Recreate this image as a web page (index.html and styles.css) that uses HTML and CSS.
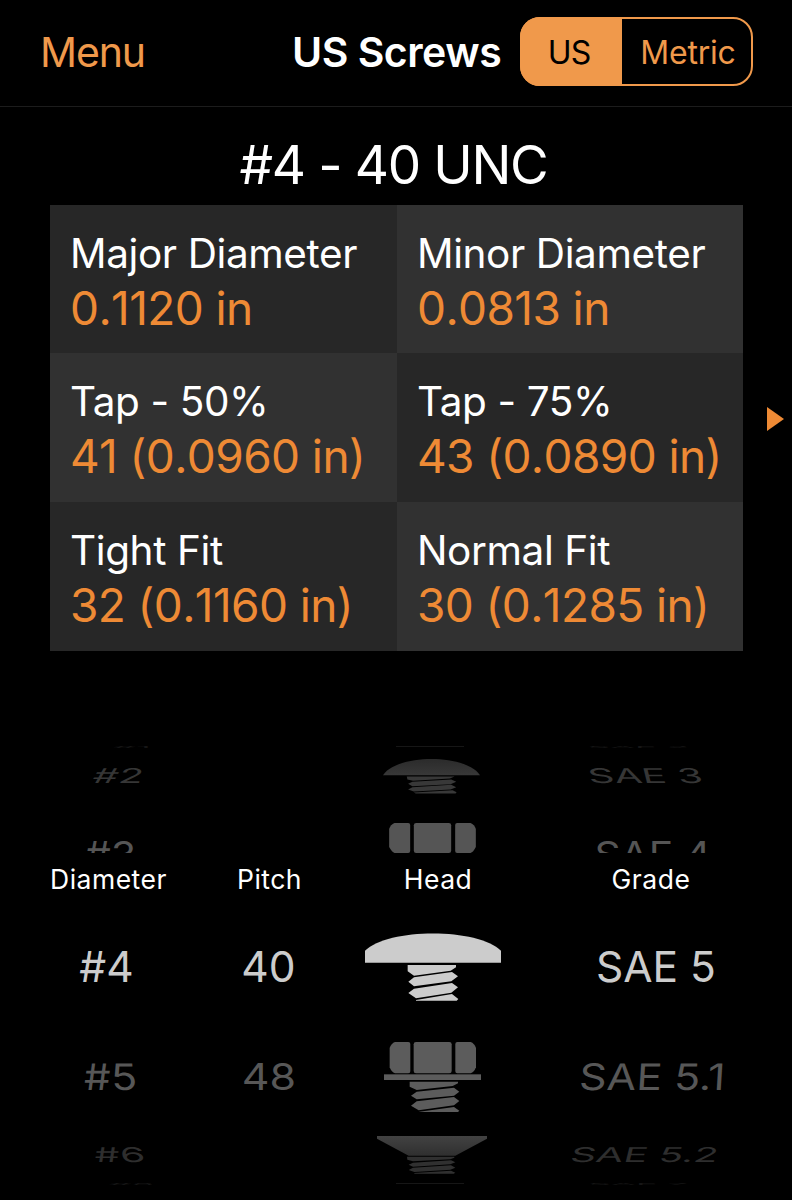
FILE: index.html
```html
<!DOCTYPE html>
<html lang="en">
<head>
    <meta charset="UTF-8">
    <meta name="viewport" content="width=device-width, initial-scale=1.0">
    <title>US Screws</title>
    <link rel="stylesheet" href="styles.css">
</head>
<body>
    <header class="navbar">
        <a class="menu">Menu</a>
        <h1>US Screws</h1>
        <div class="segmented">
            <span class="segment active">US</span>
            <span class="segment">Metric</span>
        </div>
    </header>

    <h2 class="screw-name">#4 - 40 UNC</h2>

    <main class="details">
        <div class="table">
            <div class="cell">
                <div class="label">Major Diameter</div>
                <div class="value">0.1120 in</div>
            </div>
            <div class="cell light">
                <div class="label">Minor Diameter</div>
                <div class="value">0.0813 in</div>
            </div>
            <div class="cell light">
                <div class="label">Tap - 50%</div>
                <div class="value">41 (0.0960 in)</div>
            </div>
            <div class="cell">
                <div class="label">Tap - 75%</div>
                <div class="value">43 (0.0890 in)</div>
            </div>
            <div class="cell">
                <div class="label">Tight Fit</div>
                <div class="value">32 (0.1160 in)</div>
            </div>
            <div class="cell light">
                <div class="label">Normal Fit</div>
                <div class="value">30 (0.1285 in)</div>
            </div>
        </div>
        <svg class="next" width="17" height="24" viewBox="0 0 17 24"><path d="M0 0L17 12L0 24Z"/></svg>
    </main>

    <section class="picker">
        <div class="row edge edge-top">
            <span class="left">#1</span>
            <span></span>
            <svg width="68" height="2" viewBox="0 0 68 2"><path d="M0 0H68V1H0Z"/></svg>
            <span class="right">SAE 2</span>
        </div>
        <div class="row far-top">
            <span class="left">#2</span>
            <span></span>
            <!-- truss head -->
            <svg width="97" height="35" viewBox="128 86 290 104">
                <defs>
                    <linearGradient id="fadeTop" x1="0" y1="0" x2="0" y2="1">
                        <stop offset="0" stop-color="#2b2b2b"/>
                        <stop offset="1" stop-color="#383838"/>
                    </linearGradient>
                </defs>
                <path fill="url(#fadeTop)" d="M128 134C170 70 376 70 418 134Z"/>
                <path d="M199 138H342L328 144L218 151L201 147ZM216 154L332 147L347 154L330 161L216 167L203 160ZM216 170L332 163L347 170L330 177L220 183L203 177ZM220 186L336 179L348 185L345 189H226Z"/>
            </svg>
            <span class="right">SAE 3</span>
        </div>
        <div class="row near-top">
            <span class="left">#3</span>
            <span></span>
            <svg width="87" height="30" viewBox="147 280 260 90">
                <path d="M163 280H204Q210 280 210 286V364Q210 370 204 370H163Q156 368 147 352V298Q151 285 163 280Z"/>
                <rect x="221" y="280" width="112" height="90" rx="7"/>
                <path d="M391 280H351Q345 280 345 286V364Q345 370 351 370H391Q399 368 407 352V298Q403 285 391 280Z"/>
            </svg>
            <span class="right">SAE 4</span>
        </div>
        <div class="row heading">
            <span>Diameter</span>
            <span>Pitch</span>
            <span>Head</span>
            <span>Grade</span>
        </div>
        <div class="row selected">
            <span>#4</span>
            <span>40</span>
            <svg width="136" height="68" viewBox="75 67 408 204">
                <path d="M75 156V120C143 51 415 51 483 120V156Z"/>
                <path d="M203 163H348V170L332 180L222 195L203 182ZM222 200L336 184L354 197L334 212L222 227L205 213ZM222 234L336 217L354 230L334 246L228 263L205 247ZM228 268L336 250L355 265L350 270H228Z"/>
            </svg>
            <span>SAE 5</span>
        </div>
        <div class="row near-bottom">
            <span class="left">#5</span>
            <span>48</span>
            <!-- hex flange head -->
            <svg width="97" height="70" viewBox="134 66 291 210">
                <path d="M167 66H207Q213 66 213 72V154Q213 160 207 160H167Q157 157 151 142V84Q156 70 167 66Z"/>
                <rect x="223" y="66" width="114" height="94" rx="7"/>
                <path d="M394 66H354Q348 66 348 72V154Q348 160 354 160H394Q404 157 410 142V84Q405 70 394 66Z"/>
                <rect x="134" y="163" width="291" height="17"/>
                <path d="M211 185H356V190L340 198L232 210L211 200ZM232 215L344 203L360 215L344 227L232 238L215 227ZM232 244L344 231L360 243L344 256L238 271L215 257ZM240 275L344 261L360 272L356 276H240Z"/>
            </svg>
            <span class="right">SAE 5.1</span>
        </div>
        <div class="row far-bottom">
            <span class="left">#6</span>
            <span></span>
            <!-- countersunk head -->
            <svg width="110" height="38" viewBox="110 348 330 114">
                <defs>
                    <linearGradient id="fadeBottom" gradientUnits="userSpaceOnUse" x1="0" y1="348" x2="0" y2="462">
                        <stop offset="0" stop-color="#424242"/>
                        <stop offset="0.5" stop-color="#303030"/>
                        <stop offset="1" stop-color="#303030"/>
                    </linearGradient>
                </defs>
                <path fill="url(#fadeBottom)" d="M110 348H440V356L345 407H205L110 356Z"/>
                <path fill="url(#fadeBottom)" d="M200 410H342V413L330 418L218 424L201 419ZM218 428L332 421L345 427L330 433L218 440L205 434ZM218 443L332 436L345 443L330 449L222 456L205 450ZM222 459L332 452L345 458L340 461H222Z"/>
            </svg>
            <span class="right">SAE 5.2</span>
        </div>
        <div class="row edge edge-bottom">
            <span class="left">#8</span>
            <span></span>
            <svg width="68" height="2" viewBox="0 0 68 2"><path d="M0 0H68V1H0Z"/></svg>
            <span class="right">SAE 7</span>
        </div>
    </section>
</body>
</html>
```
FILE: styles.css
```css
* {
    box-sizing: border-box;
}
body {
    margin: 0;
    width: 792px;
    height: 1200px;
    overflow: hidden;
    background: #000;
    color: #fff;
    font-family: Inter, "Liberation Sans", sans-serif;
}
.navbar {
    display: flex;
    align-items: center;
    height: 107px;
    padding: 0 39px 3px 40px;
    border-bottom: 1px solid #1c1c1c;
}
.menu {
    width: 252px;
    font-size: 41px;
    letter-spacing: -1.1px;
    color: #f0994b;
}
h1 {
    width: 228px;
    margin: 0;
    font-size: 41px;
    font-weight: 600;
    letter-spacing: -0.5px;
    white-space: nowrap;
}
.segmented {
    display: flex;
    width: 233px;
    height: 69px;
    border: 2px solid #f0994b;
    border-radius: 20px;
}
.segment {
    flex: 1;
    display: flex;
    align-items: center;
    justify-content: center;
    padding: 1px 0 0 3px;
    font-size: 32px;
    letter-spacing: -0.2px;
    color: #f0994b;
}
.segment.active {
    flex: 0 0 102px;
    margin: -2px 0 -2px -2px;
    padding: 1px 4px 0 0;
    border-radius: 20px 0 0 20px;
    background: #f0994b;
    color: #000;
    letter-spacing: -1px;
}
.screw-name {
    height: 98px;
    margin: 0;
    padding-top: 17px;
    padding-right: 5px;
    font-size: 53px;
    font-weight: 400;
    line-height: 83px;
    letter-spacing: -1.35px;
    text-align: center;
}
.details {
    display: flex;
    align-items: center;
    gap: 24px;
    padding-left: 50px;
}
.table {
    display: grid;
    grid-template-columns: 347px 346px;
    grid-template-rows: 148px 149px 149px;
}
.cell {
    padding: 22px 0 0 20px;
    background: #272727;
    white-space: nowrap;
}
.cell.light {
    background: #313131;
}
.label {
    font-size: 40.5px;
    line-height: 54px;
    letter-spacing: -0.4px;
}
.value {
    font-size: 46px;
    line-height: 54px;
    letter-spacing: -0.6px;
    font-kerning: none;
    color: #ee8a35;
}
.next {
    margin-bottom: 18px;
    fill: #ee8a35;
}

/* picker wheel: rows shrink and fade as they turn away */
.picker {
    margin-top: 92px;
}
.row {
    display: grid;
    align-items: center;
    justify-items: center;
    font-size: 42.5px;
    line-height: 42px;
    white-space: nowrap;
}
.edge {
    height: 7px;
    grid-template-columns: 264px 34px 264px 152px;
    color: #161616;
    fill: #161616;
    overflow: hidden;
}
.edge span {
    height: 42px;
    margin: -20px 0;
    transform: scale(0.85, 0.06);
}
.edge-top {
    margin-bottom: 1px;
}
.edge-bottom {
    height: 2px;
}
.far-top {
    height: 50px;
    grid-template-columns: 236px 64px 262px 166px;
    color: #363636;
    fill: #383838;
}
.far-top span {
    transform: scale(0.95, 0.48);
}
.far-top .left {
    transform: scale(0.95, 0.48) skewX(-7deg);
}
.far-top .right {
    transform: scale(0.95, 0.48) skewX(7deg);
}
.near-top {
    height: 52px;
    grid-template-columns: 221px 99px 224px 217px;
    align-items: start;
    color: #555;
    fill: #555;
    overflow: hidden;
}
.near-top span {
    margin-top: 33px;
    transform: scale(0.96, 0.86);
}
.near-top svg {
    margin-top: 22px;
}
.heading {
    height: 53px;
    padding-bottom: 2px;
    grid-template-columns: 217px 105px 232px 194px;
    font-size: 26.5px;
    line-height: 30px;
    letter-spacing: 0.5px;
}
.selected {
    height: 121px;
    grid-template-columns: 213px 111px 218px 228px;
    color: #ccc;
    fill: #ccc;
}
.near-bottom {
    height: 100px;
    grid-template-columns: 220px 98px 229px 210px;
    color: #575757;
    fill: #5c5c5c;
}
.near-bottom span {
    transform: scale(1.01, 0.86);
}
.near-bottom .left {
    transform: scale(1.01, 0.86) skewX(3deg);
}
.near-bottom .right {
    transform: scale(1.01, 0.86) skewX(-3deg);
}
.far-bottom {
    height: 56px;
    grid-template-columns: 239px 60px 266px 159px;
    color: #2e2e2e;
}
.far-bottom .left {
    transform: scale(0.95, 0.48) skewX(5deg);
}
.far-bottom .right {
    transform: scale(0.94, 0.48) skewX(-7deg);
}
```
